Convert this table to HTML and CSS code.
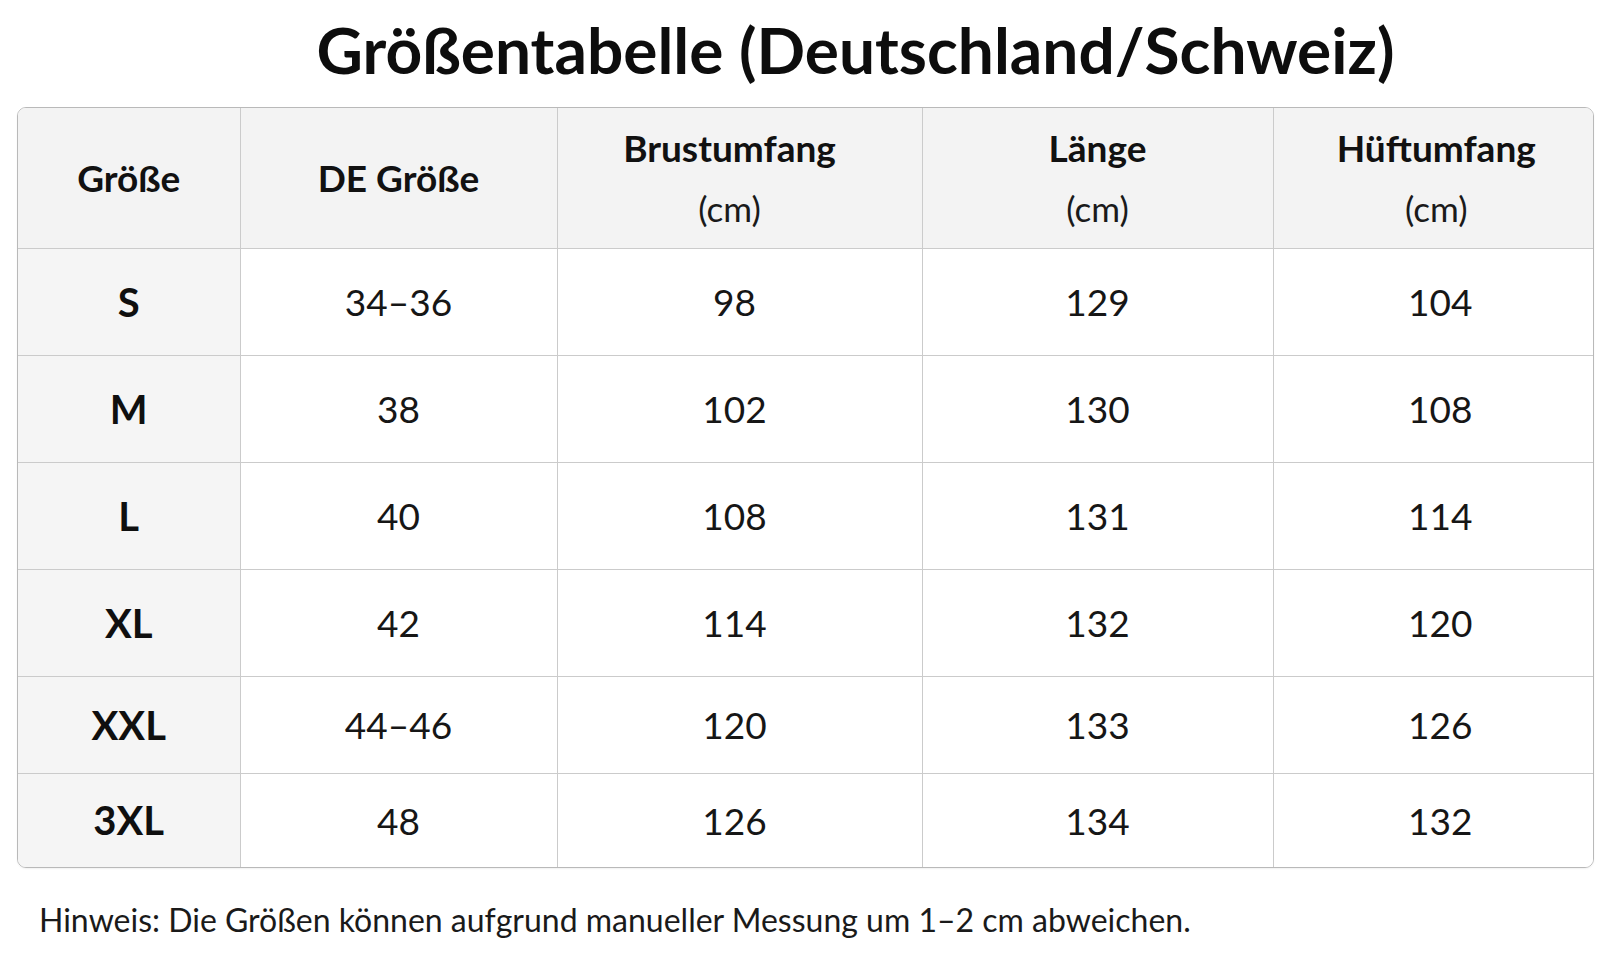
FILE: index.html
```html
<!DOCTYPE html>
<html lang="de">
<head>
<meta charset="utf-8">
<title>Größentabelle</title>
<link rel="stylesheet" href="styles.css">
</head>
<body>
<main class="page">
  <h1 class="title">Größentabelle (Deutschland/Schweiz)</h1>
  <div class="table-wrap">
    <table class="size-table">
      <colgroup>
        <col class="c1"><col class="c2"><col class="c3"><col class="c4"><col class="c5">
      </colgroup>
      <thead>
        <tr>
          <th>Größe</th>
          <th>DE Größe</th>
          <th><span class="h-main">Brustumfang</span><span class="h-unit">(cm)</span></th>
          <th><span class="h-main">Länge</span><span class="h-unit">(cm)</span></th>
          <th><span class="h-main">Hüftumfang</span><span class="h-unit">(cm)</span></th>
        </tr>
      </thead>
      <tbody>
        <tr class="r-tall"><td class="sz">S</td><td>34–36</td><td>98</td><td>129</td><td>104</td></tr>
        <tr class="r-tall"><td class="sz">M</td><td>38</td><td>102</td><td>130</td><td>108</td></tr>
        <tr class="r-tall"><td class="sz">L</td><td>40</td><td>108</td><td>131</td><td>114</td></tr>
        <tr class="r-tall"><td class="sz">XL</td><td>42</td><td>114</td><td>132</td><td>120</td></tr>
        <tr class="r-mid"><td class="sz">XXL</td><td>44–46</td><td>120</td><td>133</td><td>126</td></tr>
        <tr class="r-short"><td class="sz">3XL</td><td>48</td><td>126</td><td>134</td><td>132</td></tr>
      </tbody>
    </table>
  </div>
  <p class="note">Hinweis: Die Größen können aufgrund manueller Messung um 1–2 cm abweichen.</p>
</main>
</body>
</html>
```

FILE: styles.css
```css
* { box-sizing: border-box; }

html, body {
  margin: 0;
  padding: 0;
  background: #ffffff;
}

body {
  font-family: Lato, "Noto Sans", "Open Sans", sans-serif;
  color: #121212;
}

.page {
  width: 1611px;
  padding: 0 17px;
}

.title {
  margin: 0;
  padding: 12px 0 0 100px;
  height: 107px;
  text-align: center;
  font-size: 64px;
  font-weight: 700;
  line-height: 76px;
  color: #0d0d0d;
}

.table-wrap {
  width: 1577px;
  border: 1px solid #b9b9b9;
  border-radius: 9px;
  overflow: hidden;
  box-shadow: 0 1px 2px rgba(0, 0, 0, 0.06);
}

.size-table {
  width: 100%;
  border-collapse: collapse;
  table-layout: fixed;
}

.c1 { width: 222px; }
.c2 { width: 317px; }
.c3 { width: 365px; }
.c4 { width: 351px; }
.c5 { width: 320px; }

.size-table th,
.size-table td {
  border: 1px solid #cbcbcb;
  text-align: center;
  vertical-align: middle;
  padding: 0;
}

.size-table tr:first-child th { border-top: none; }
.size-table tr:last-child td { border-bottom: none; }
.size-table th:first-child,
.size-table td:first-child { border-left: none; }
.size-table th:last-child,
.size-table td:last-child { border-right: none; }

.size-table th:nth-child(3) { padding-right: 20px; }
.size-table td:nth-child(3) { padding-right: 10px; }
.size-table th:nth-child(5) { padding-left: 6px; }
.size-table td:nth-child(5) { padding-left: 14px; }

.size-table thead tr { height: 140px; }

.size-table th {
  background: #f3f3f3;
  font-size: 37px;
  font-weight: 700;
  color: #111;
  line-height: 44px;
}

.h-main,
.h-unit {
  display: block;
}

.h-main { padding-bottom: 16px; }

.h-unit {
  font-weight: 400;
  font-size: 35px;
  color: #1a1a1a;
}

.size-table td {
  font-size: 37px;
  font-weight: 400;
  color: #161616;
  background: #ffffff;
}

.size-table td.sz {
  background: #f5f5f5;
  font-weight: 700;
  font-size: 40px;
  color: #0f0f0f;
}

.r-tall { height: 107px; }
.r-mid { height: 97px; }
.r-short { height: 94px; }

.note {
  margin: 32px 0 0;
  padding-left: 22px;
  font-size: 32px;
  line-height: 40px;
  color: #1a1a1a;
}
```
